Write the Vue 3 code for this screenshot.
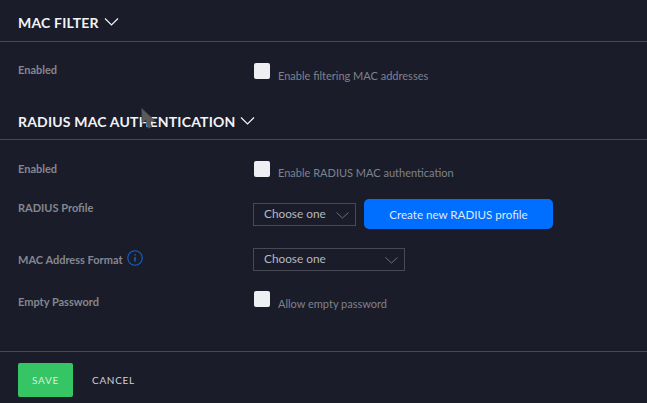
<script setup>
const chevron = 'M1 1.5 L7.5 8 L14 1.5'
</script>

<template>
  <div class="page">
    <section class="section first">
      <h2 class="heading">MAC FILTER
        <svg class="chev" width="15" height="10" viewBox="0 0 15 10"><path :d="chevron" /></svg>
      </h2>
      <div class="rows">
        <div class="row r-mac">
          <div class="label">Enabled</div>
          <label class="check"><span class="box"></span><span class="hint">Enable filtering MAC addresses</span></label>
        </div>
      </div>
    </section>

    <section class="section second">
      <h2 class="heading">RADIUS MAC AUTHENTICATION
        <svg class="chev" width="15" height="10" viewBox="0 0 15 10"><path :d="chevron" /></svg>
      </h2>
      <div class="rows">
        <div class="row r-en">
          <div class="label">Enabled</div>
          <label class="check"><span class="box"></span><span class="hint">Enable RADIUS MAC authentication</span></label>
        </div>
        <div class="row r-prof">
          <div class="label">RADIUS Profile</div>
          <div class="controls">
            <div class="select small">Choose one
              <svg class="sel-chev" width="13" height="7" viewBox="0 0 13 7"><path d="M0.5 0.5 L6.5 6 L12.5 0.5" /></svg>
            </div>
            <button class="primary">Create new RADIUS profile</button>
          </div>
        </div>
        <div class="row r-fmt">
          <div class="label">MAC Address Format
            <svg class="info" width="16" height="16" viewBox="0 0 16 16">
              <circle cx="8" cy="8" r="7.2" />
              <path d="M8 7 V11.5 M8 4.2 V5.4" />
            </svg>
          </div>
          <div class="controls">
            <div class="select wide">Choose one
              <svg class="sel-chev" width="13" height="7" viewBox="0 0 13 7"><path d="M0.5 0.5 L6.5 6 L12.5 0.5" /></svg>
            </div>
          </div>
        </div>
        <div class="row r-empty">
          <div class="label">Empty Password</div>
          <label class="check"><span class="box"></span><span class="hint">Allow empty password</span></label>
        </div>
      </div>
    </section>

    <footer class="footer">
      <button class="save">SAVE</button>
      <button class="cancel">CANCEL</button>
    </footer>

    <svg class="cursor" width="16" height="22" viewBox="0 0 16 22">
      <path d="M0.5 0 L1 15 L4.8 12.2 L7 20.5 L10.8 19.2 L9 13.4 L14.5 13.2 Z" />
    </svg>
  </div>
</template>

<style>
html, body { margin: 0; background: #1a1c2a; }
</style>

<style scoped>
.page {
  position: relative;
  width: 647px;
  height: 403px;
  overflow: hidden;
  background: #1a1c2a;
  font-family: Lato, "Liberation Sans", sans-serif;
  font-size: 11px;
  color: #8f929c;
}
.section.first { padding-top: 12px; }
.section.second { padding-top: 33px; }
.heading {
  display: flex;
  align-items: center;
  gap: 5px;
  height: 20px;
  margin: 0;
  padding: 0 0 9px 18px;
  border-bottom: 1px solid #474955;
  font-size: 14px;
  font-weight: 700;
  letter-spacing: 0.18px;
  color: #f2f3f5;
}
.second .heading { padding-bottom: 8px; }
.chev { fill: none; stroke: #f2f3f5; stroke-width: 1.2; }
.row {
  display: grid;
  grid-template-columns: 235px 1fr;
  padding-left: 18px;
}
.label {
  display: flex;
  align-items: flex-start;
  gap: 4px;
  line-height: 16px;
  font-weight: 700;
  color: #85878f;
}
.r-mac { padding-top: 20px; }
.r-en { padding-top: 21px; }
.r-prof { padding-top: 22px; }
.r-prof .label { padding-top: 1px; }
.r-fmt { padding-top: 19px; }
.r-fmt .label { padding-top: 4px; }
.r-empty { padding-top: 20px; }
.r-empty .label { padding-top: 3px; }
.r-mac .box { margin-top: 1px; }
.check {
  display: flex;
  align-items: flex-start;
  gap: 8px;
  height: 16px;
  padding-left: 1px;
}
.box {
  width: 16px;
  height: 16px;
  border-radius: 2px;
  background: #eeeff2;
  flex: none;
}
.hint {
  font-size: 11px;
  line-height: 16px;
  color: #7f828d;
  padding-top: 5px;
}
.r-mac .hint { padding-top: 6px; }
.r-en .hint { padding-top: 4px; }
.controls { display: flex; align-items: center; gap: 8px; }
.select {
  box-sizing: border-box;
  position: relative;
  height: 23px;
  line-height: 20px;
  padding-left: 10px;
  border: 1px solid #474955;
  color: #b6b8bf;
  font-size: 11.8px;
}
.select.small { width: 103px; }
.select.wide { width: 152px; }
.sel-chev {
  position: absolute;
  right: 6px;
  top: 8px;
  fill: none;
  stroke: #6d6f7a;
  stroke-width: 1;
}
.primary {
  width: 189px;
  height: 30px;
  border: 0;
  border-radius: 5px;
  background: #006fff;
  color: #dfe9f7;
  font: 400 11.6px Lato, "Liberation Sans", sans-serif;
}
.info { fill: none; stroke: #1565c8; stroke-width: 1.1; position: relative; top: -2px; }
.info path { stroke-width: 1.5; }
.footer {
  position: absolute;
  left: 0; right: 0; top: 351px;
  border-top: 1px solid #474955;
  display: flex;
  align-items: center;
  gap: 19px;
  padding: 11px 0 0 18px;
}
.save {
  width: 55px;
  height: 34px;
  border: 0;
  border-radius: 2px;
  background: #35c565;
  color: #d5efde;
  font: 400 10px Lato, "Liberation Sans", sans-serif;
  letter-spacing: 0.7px;
}
.cancel {
  border: 0;
  padding: 0;
  background: none;
  color: #cfd1d6;
  font: 400 10px Lato, "Liberation Sans", sans-serif;
  letter-spacing: 0.7px;
}
.cursor {
  position: absolute;
  left: 141px;
  top: 108px;
}
.cursor path { fill: #5a5a5c; stroke: #3a3b42; stroke-width: 0.5; }
</style>
